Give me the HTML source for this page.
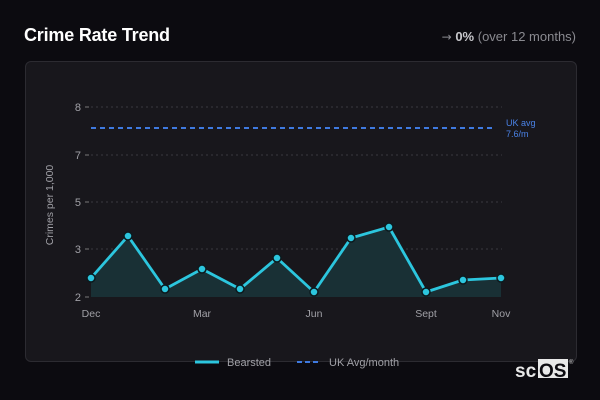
<!DOCTYPE html>
<html><head><style>
body{margin:0;width:600px;height:400px;background:#0c0b10;font-family:"Liberation Sans","DejaVu Sans",sans-serif;overflow:hidden;position:relative}
.t{position:absolute;left:24px;top:25px;font:bold 18px "Liberation Sans",sans-serif;color:#fff;letter-spacing:-0.2px}
.r{position:absolute;right:24px;top:29px;font:13px "Liberation Sans",sans-serif;color:#8a8a90}
.r b{color:#c8c8cc}
.r i{font-style:normal;font-family:"DejaVu Sans",sans-serif;font-size:12px}
.card{position:absolute;left:25px;top:61px;width:550px;height:299px;background:#18171c;border:1px solid #2c2b31;border-radius:6px}
</style></head><body>
<div class="t">Crime Rate Trend</div>
<div class="r"><i>→</i> <b>0%</b> (over 12 months)</div>
<div class="card"></div>
<svg style="position:absolute;left:0;top:0" width="600" height="400" font-family="Liberation Sans, sans-serif">
<g stroke="#3a3940" stroke-dasharray="2,3" stroke-width="1">
<line x1="91" y1="107" x2="502" y2="107"/><line x1="91" y1="155" x2="502" y2="155"/><line x1="91" y1="202" x2="502" y2="202"/><line x1="91" y1="249" x2="502" y2="249"/>
</g>
<g stroke="#777" stroke-width="1"><line x1="85" y1="107" x2="89" y2="107"/><line x1="85" y1="155" x2="89" y2="155"/><line x1="85" y1="202" x2="89" y2="202"/><line x1="85" y1="249" x2="89" y2="249"/><line x1="85" y1="297" x2="89" y2="297"/></g>
<g fill="#a0a0a6" font-size="11" text-anchor="end"><text x="81" y="111">8</text><text x="81" y="159">7</text><text x="81" y="206">5</text><text x="81" y="253">3</text><text x="81" y="301">2</text></g>
<text transform="translate(53,205) rotate(-90)" fill="#a0a0a6" font-size="10.5" text-anchor="middle">Crimes per 1,000</text>
<line x1="91" y1="128" x2="494" y2="128" stroke="#3f7ae0" stroke-width="2" stroke-dasharray="5,4"/>
<text x="506" y="126" fill="#4a82e6" font-size="9">UK avg</text><text x="506" y="137" fill="#4a82e6" font-size="9">7.6/m</text>
<polygon points="91,297 91,278 128,236 165,289 202,269 240,289 277,258 314,292 351,238 389,227 426,292 463,280 501,278 501,297" fill="#193035"/>
<polyline points="91,278 128,236 165,289 202,269 240,289 277,258 314,292 351,238 389,227 426,292 463,280 501,278" fill="none" stroke="#2cc6de" stroke-width="2.8" stroke-linejoin="round"/>
<g fill="#2cc6de" stroke="#0c1a1e" stroke-width="1.5">
<circle cx="91" cy="278" r="4"/><circle cx="128" cy="236" r="4"/><circle cx="165" cy="289" r="4"/><circle cx="202" cy="269" r="4"/><circle cx="240" cy="289" r="4"/><circle cx="277" cy="258" r="4"/><circle cx="314" cy="292" r="4"/><circle cx="351" cy="238" r="4"/><circle cx="389" cy="227" r="4"/><circle cx="426" cy="292" r="4"/><circle cx="463" cy="280" r="4"/><circle cx="501" cy="278" r="4"/>
</g>
<g fill="#a0a0a6" font-size="10.5" text-anchor="middle"><text x="91" y="317">Dec</text><text x="202" y="317">Mar</text><text x="314" y="317">Jun</text><text x="426" y="317">Sept</text><text x="501" y="317">Nov</text></g>
<line x1="195" y1="362" x2="219" y2="362" stroke="#2cc6de" stroke-width="3"/>
<text x="227" y="366" fill="#a0a0a6" font-size="11">Bearsted</text>
<line x1="297" y1="362" x2="321" y2="362" stroke="#3f7ae0" stroke-width="2" stroke-dasharray="5,3"/>
<text x="329" y="366" fill="#a0a0a6" font-size="11">UK Avg/month</text>
<rect x="538" y="359" width="30" height="19" fill="#e8e8e8"/>
<text x="515" y="377" fill="#e8e8e8" font-size="19" font-weight="bold">sc</text>
<text x="539" y="377" fill="#0c0b10" font-size="19" font-weight="bold">OS</text>
<text x="569" y="364" fill="#ccc" font-size="6">®</text>
</svg>
</body></html>
